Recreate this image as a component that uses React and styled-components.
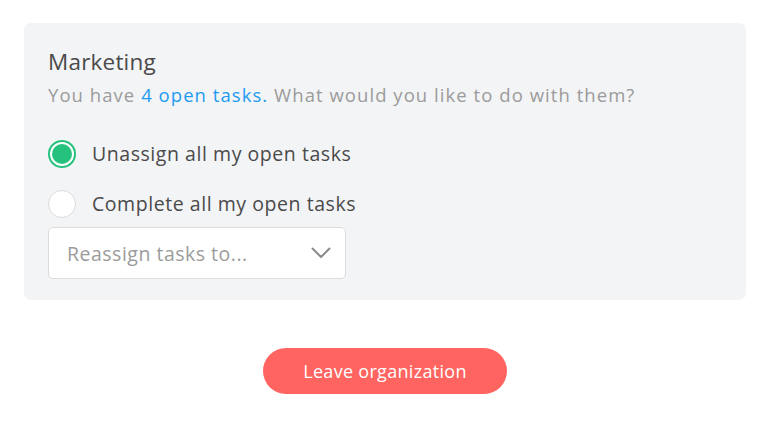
import React from "react";
import styled, { createGlobalStyle } from "styled-components";

const Global = createGlobalStyle`
  html, body { margin: 0; padding: 0; background: #fff; }
  body { font-family: "Open Sans", "Lato", sans-serif; -webkit-font-smoothing: antialiased; }
  * { box-sizing: border-box; }
`;

const Page = styled.div`
  width: 770px;
  padding: 23px 24px 0 24px;
  display: flex;
  flex-direction: column;
  align-items: center;
`;

const Panel = styled.div`
  width: 722px;
  height: 277px;
  background: #f3f4f6;
  border-radius: 7px;
  padding: 24px 24px 0 24px;
  display: flex;
  flex-direction: column;
  align-self: stretch;
`;

const Title = styled.div`
  font-size: 22.5px;
  letter-spacing: 0.2px;
  color: #4a4a4a;
  line-height: 30px;
`;

const Subtitle = styled.div`
  font-size: 18.5px;
  letter-spacing: 1.05px;
  color: #9b9b9b;
  line-height: 26px;
  margin-top: 5px;
  white-space: nowrap;
`;

const Link = styled.span`
  color: #1e9bf0;
`;

const Options = styled.div`
  display: flex;
  flex-direction: column;
  gap: 22px;
  margin-top: 32px;
`;

const Option = styled.label`
  display: flex;
  align-items: center;
  gap: 16px;
  font-size: 19.5px;
  letter-spacing: 0.55px;
  color: #4a4a4a;
  line-height: 28px;
`;

const Radio = styled.span`
  width: 28px;
  height: 28px;
  border-radius: 50%;
  background: #fff;
  border: ${p => (p.$checked ? "2px solid #25c27e" : "1px solid #dcdcdc")};
  display: flex;
  align-items: center;
  justify-content: center;
  flex-shrink: 0;
  &::after {
    content: "";
    display: ${p => (p.$checked ? "block" : "none")};
    width: 20px;
    height: 20px;
    border-radius: 50%;
    background: #25c27e;
  }
`;

const Select = styled.div`
  margin-top: 9px;
  width: 298px;
  height: 52px;
  background: #fff;
  border: 1px solid #dcdcdc;
  border-radius: 5px;
  display: flex;
  align-items: center;
  justify-content: space-between;
  padding: 0 14px 0 18px;
  font-size: 19.5px;
  letter-spacing: 0.5px;
  color: #9b9b9b;
`;

const Button = styled.button`
  margin-top: 48px;
  width: 244px;
  height: 46px;
  border: none;
  border-radius: 23px;
  background: #ff6460;
  color: #fff;
  font-family: inherit;
  font-size: 18px;
  letter-spacing: 0.3px;
  cursor: pointer;
`;

export default function App() {
  return (
    <>
      <Global />
      <Page>
        <Panel>
          <Title>Marketing</Title>
          <Subtitle>
            You have <Link>4 open tasks.</Link> What would you like to do with them?
          </Subtitle>
          <Options>
            <Option>
              <Radio $checked />
              Unassign all my open tasks
            </Option>
            <Option>
              <Radio />
              Complete all my open tasks
            </Option>
          </Options>
          <Select>
            Reassign tasks to...
            <svg width="20" height="12" viewBox="0 0 20 12" fill="none">
              <path d="M1.5 1.5 L10 10 L18.5 1.5" stroke="#8a8a8a" strokeWidth="2" strokeLinecap="round" strokeLinejoin="round" />
            </svg>
          </Select>
        </Panel>
        <Button>Leave organization</Button>
      </Page>
    </>
  );
}
